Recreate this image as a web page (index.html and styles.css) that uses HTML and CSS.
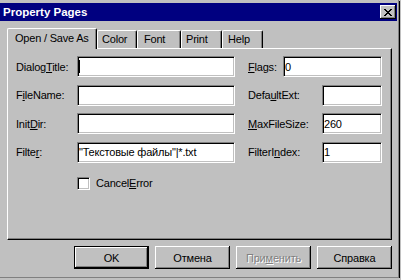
FILE: index.html
```html
<!DOCTYPE html>
<html lang="ru">
<head>
    <meta charset="UTF-8">
    <title>Property Pages</title>
    <link rel="stylesheet" href="styles.css">
</head>
<body>

<div class="window">
    <div class="titlebar">
        <span class="title">Property Pages</span>
        <button class="close">
            <svg width="8" height="7" viewBox="0 0 8 7">
                <path d="M0 0h2v1H0zM6 0h2v1H6zM1 1h2v1H1zM5 1h2v1H5zM2 2h4v1H2zM3 3h2v1H3zM2 4h4v1H2zM1 5h2v1H1zM5 5h2v1H5zM0 6h2v1H0zM6 6h2v1H6z" fill="#000"/>
            </svg>
        </button>
    </div>

    <div class="content">
        <!-- tabs -->
        <div class="tabs">
            <div class="tab active">Open / Save As</div>
            <div class="tab t-color">Color</div>
            <div class="tab t-font">Font</div>
            <div class="tab t-print">Print</div>
            <div class="tab t-help">Help</div>
        </div>

        <div class="panel">
            <div class="fields">
                <div class="row">
                    <span class="lbl">Dialog<u>T</u>itle:</span>
                    <div class="edit wide"><span class="caret"></span></div>
                    <span class="lbl rlbl short"><u>F</u>lags:</span>
                    <div class="edit long">0</div>
                </div>
                <div class="row">
                    <span class="lbl">F<u>i</u>leName:</span>
                    <div class="edit wide"></div>
                    <span class="lbl rlbl">Defa<u>u</u>ltExt:</span>
                    <div class="edit small"></div>
                </div>
                <div class="row">
                    <span class="lbl">Init<u>D</u>ir:</span>
                    <div class="edit wide"></div>
                    <span class="lbl rlbl"><u>M</u>axFileSize:</span>
                    <div class="edit small">260</div>
                </div>
                <div class="row">
                    <span class="lbl">Filte<u>r</u>:</span>
                    <div class="edit wide">"Текстовые файлы"|*.txt</div>
                    <span class="lbl rlbl">FilterI<u>n</u>dex:</span>
                    <div class="edit small">1</div>
                </div>
            </div>
            <div class="check-row">
                <span class="checkbox"></span>
                <span>Cancel<u>E</u>rror</span>
            </div>
        </div>

        <div class="buttons">
            <button class="btn default">OK</button>
            <button class="btn">Отмена</button>
            <button class="btn disabled">При<u>м</u>енить</button>
            <button class="btn">Справка</button>
        </div>
    </div>
</div>

</body>
</html>
```

FILE: styles.css
```css
body {
    margin: 0;
    background: #c0c0c0;
    font-family: "Liberation Sans", Arial, sans-serif;
    font-size: 11px;
    letter-spacing: -0.2px;
    color: #000;
}
u {
    text-decoration: underline;
    text-underline-offset: 1px;
}
.window {
    width: 398px;
    height: 274px;
    padding-top: 3px;
    border-right: 1px solid #808080;
    border-bottom: 1px solid #808080;
    box-shadow: 1px 1px 0 #000;
}
.titlebar {
    display: flex;
    align-items: center;
    height: 18px;
    margin-right: 1px;
    padding-left: 3px;
    background: #000080;
    color: #fff;
}
.title {
    font-weight: bold;
    font-size: 11.5px;
    letter-spacing: 0;
}
.close {
    display: flex;
    align-items: center;
    justify-content: center;
    width: 16px;
    height: 14px;
    margin: 0 1px 0 auto;
    padding: 0;
    border: none;
    background: #c0c0c0;
    box-shadow: inset -1px -1px #000, inset 1px 1px #fff, inset -2px -2px #808080;
}
.content {
    padding: 7px 6px 0 7px;
}
.tabs {
    display: flex;
    align-items: flex-end;
    height: 20px;
}
.tab {
    position: relative;
    display: flex;
    align-items: center;
    box-sizing: border-box;
    height: 18px;
    padding-left: 4px;
    padding-bottom: 1px;
    border-top: 1px solid #fff;
    border-left: 1px solid #fff;
    border-right: 1px solid #000;
    border-radius: 2px 2px 0 0;
    box-shadow: inset -1px 0 #808080;
}
.tab.active {
    z-index: 1;
    width: 90px;
    height: 21px;
    margin-bottom: -1px;
    padding-left: 7px;
    padding-bottom: 2px;
    background: #c0c0c0;
}
.t-color { width: 40px; }
.t-font { width: 44px; padding-left: 6px; }
.t-print { width: 41px; }
.t-help { width: 41px; padding-left: 5px; }

.panel {
    box-sizing: border-box;
    height: 192px;
    padding: 7px 0 0 7px;
    border-top: 1px solid #fff;
    border-left: 1px solid #fff;
    border-right: 1px solid #000;
    border-bottom: 1px solid #000;
    box-shadow: inset -1px -1px #808080;
}
.fields {
    display: grid;
    row-gap: 7.67px;
}
.row {
    display: flex;
    align-items: center;
    height: 21px;
}
.lbl {
    width: 61px;
    padding-left: 1px;
    white-space: nowrap;
}
.rlbl {
    width: 74px;
    margin-left: 13px;
    padding-left: 0;
}
.rlbl.short {
    width: 35px;
}
.edit {
    box-sizing: border-box;
    height: 21px;
    display: flex;
    align-items: center;
    padding-left: 1px;
    background: #fff;
    border-top: 1px solid #808080;
    border-left: 1px solid #808080;
    border-right: 1px solid #fff;
    border-bottom: 1px solid #fff;
    box-shadow: inset 1px 1px #000, inset -1px -1px #c0c0c0;
    white-space: nowrap;
    overflow: hidden;
}
.edit.wide { width: 158px; }
.edit.small { width: 60px; }
.edit.long { width: 99px; }
.caret {
    width: 1px;
    height: 13px;
    background: #000;
}
.check-row {
    display: flex;
    align-items: center;
    gap: 6px;
    margin: 14px 0 0 62px;
}
.checkbox {
    box-sizing: border-box;
    width: 13px;
    height: 13px;
    background: #fff;
    border-top: 1px solid #808080;
    border-left: 1px solid #808080;
    border-right: 1px solid #fff;
    border-bottom: 1px solid #fff;
    box-shadow: inset 1px 1px #000, inset -1px -1px #c0c0c0;
}
.buttons {
    display: flex;
    justify-content: flex-end;
    gap: 6px;
    margin-top: 6px;
}
.btn {
    box-sizing: border-box;
    width: 75px;
    height: 23px;
    padding: 0;
    border: none;
    background: #c0c0c0;
    font-family: inherit;
    font-size: 11px;
    letter-spacing: -0.2px;
    color: #000;
    box-shadow: inset -1px -1px #000, inset 1px 1px #fff, inset -2px -2px #808080;
}
.btn.default {
    border: 1px solid #000;
}
.btn.disabled {
    color: #808080;
    text-shadow: 1px 1px 0 #fff;
}
```
